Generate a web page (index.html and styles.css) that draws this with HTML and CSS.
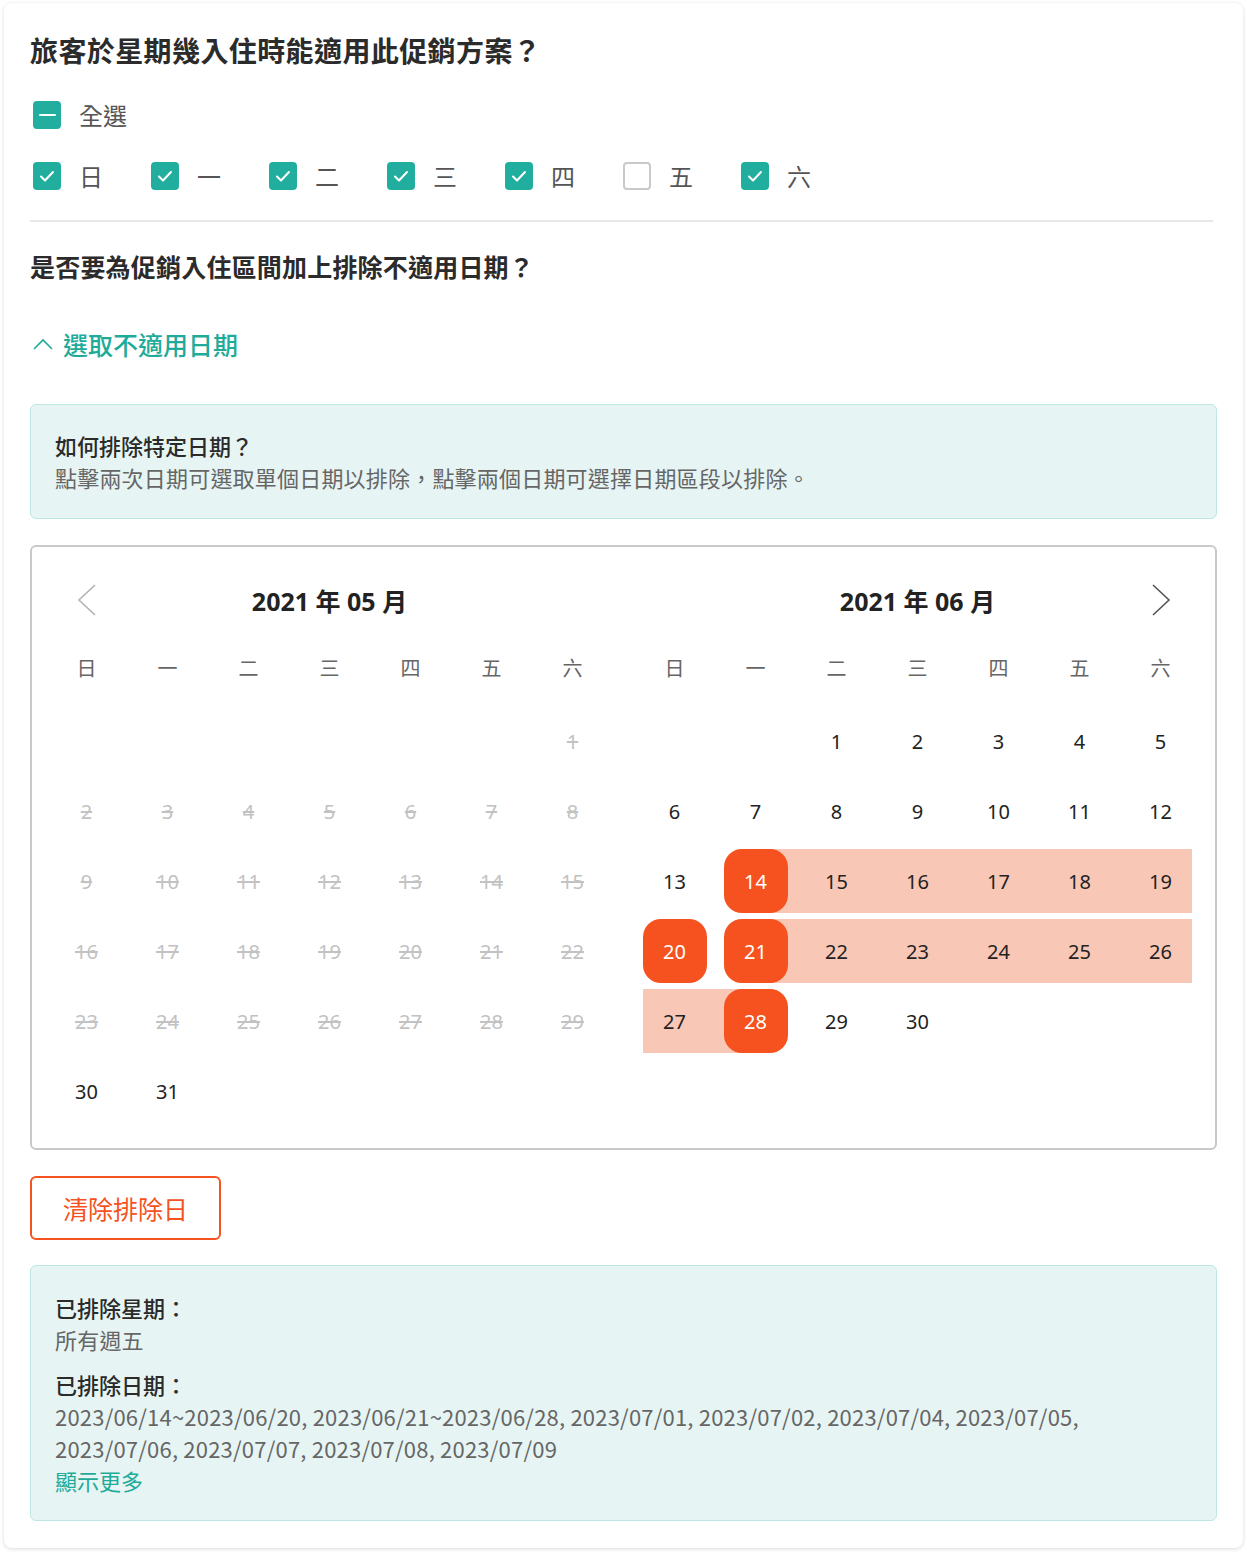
FILE: index.html
```html
<!DOCTYPE html>
<html lang="zh-Hant">
<head>
  <meta charset="UTF-8" />
  <meta name="viewport" content="width=device-width, initial-scale=1.0"/>
  <title>促銷方案 - 排除日期</title>
  <link rel="stylesheet" href="styles.css">
</head>
<body>

<div class="card">
  <h2 class="title">旅客於星期幾入住時能適用此促銷方案？</h2>

  <div class="check-row all">
    <label class="check"><span class="box partial"><i></i></span><span class="label">全選</span></label>
  </div>

  <div class="check-row days">
    <label class="check"><span class="box on"><svg viewBox="0 0 28 28"><polyline points="8,14.5 12,18.5 20,10"/></svg></span><span class="label">日</span></label>
    <label class="check"><span class="box on"><svg viewBox="0 0 28 28"><polyline points="8,14.5 12,18.5 20,10"/></svg></span><span class="label">一</span></label>
    <label class="check"><span class="box on"><svg viewBox="0 0 28 28"><polyline points="8,14.5 12,18.5 20,10"/></svg></span><span class="label">二</span></label>
    <label class="check"><span class="box on"><svg viewBox="0 0 28 28"><polyline points="8,14.5 12,18.5 20,10"/></svg></span><span class="label">三</span></label>
    <label class="check"><span class="box on"><svg viewBox="0 0 28 28"><polyline points="8,14.5 12,18.5 20,10"/></svg></span><span class="label">四</span></label>
    <label class="check"><span class="box"></span><span class="label">五</span></label>
    <label class="check"><span class="box on"><svg viewBox="0 0 28 28"><polyline points="8,14.5 12,18.5 20,10"/></svg></span><span class="label">六</span></label>
  </div>

  <hr class="divider">

  <h3 class="subtitle">是否要為促銷入住區間加上排除不適用日期？</h3>

  <div class="toggle">
    <svg viewBox="0 0 20 12"><polyline points="1,11 10,2 19,11"/></svg>
    <span>選取不適用日期</span>
  </div>

  <div class="notice">
    <div class="notice-title">如何排除特定日期？</div>
    <div class="notice-text">點擊兩次日期可選取單個日期以排除，點擊兩個日期可選擇日期區段以排除。</div>
  </div>

  <div class="calendar">
    <div class="months">
      <!-- May -->
      <div class="month">
        <div class="month-head">
          <span class="nav prev"><svg viewBox="0 0 20 32"><polyline points="18,1 2,16 18,31"/></svg></span>
          <span class="month-title">2021 年 05 月</span>
          <span></span>
        </div>
        <div class="week">
          <span>日</span><span>一</span><span>二</span><span>三</span><span>四</span><span>五</span><span>六</span>
        </div>
        <div class="days-grid">
          <div class="day"></div><div class="day"></div><div class="day"></div><div class="day"></div><div class="day"></div><div class="day"></div><div class="day off"><span>1</span></div>
          <div class="day off"><span>2</span></div><div class="day off"><span>3</span></div><div class="day off"><span>4</span></div><div class="day off"><span>5</span></div><div class="day off"><span>6</span></div><div class="day off"><span>7</span></div><div class="day off"><span>8</span></div>
          <div class="day off"><span>9</span></div><div class="day off"><span>10</span></div><div class="day off"><span>11</span></div><div class="day off"><span>12</span></div><div class="day off"><span>13</span></div><div class="day off"><span>14</span></div><div class="day off"><span>15</span></div>
          <div class="day off"><span>16</span></div><div class="day off"><span>17</span></div><div class="day off"><span>18</span></div><div class="day off"><span>19</span></div><div class="day off"><span>20</span></div><div class="day off"><span>21</span></div><div class="day off"><span>22</span></div>
          <div class="day off"><span>23</span></div><div class="day off"><span>24</span></div><div class="day off"><span>25</span></div><div class="day off"><span>26</span></div><div class="day off"><span>27</span></div><div class="day off"><span>28</span></div><div class="day off"><span>29</span></div>
          <div class="day"><span>30</span></div><div class="day"><span>31</span></div>
        </div>
      </div>

      <!-- June -->
      <div class="month">
        <div class="month-head">
          <span></span>
          <span class="month-title">2021 年 06 月</span>
          <span class="nav next"><svg viewBox="0 0 20 32"><polyline points="2,1 18,16 2,31"/></svg></span>
        </div>
        <div class="week">
          <span>日</span><span>一</span><span>二</span><span>三</span><span>四</span><span>五</span><span>六</span>
        </div>
        <div class="days-grid">
          <div class="day"></div><div class="day"></div><div class="day"><span>1</span></div><div class="day"><span>2</span></div><div class="day"><span>3</span></div><div class="day"><span>4</span></div><div class="day"><span>5</span></div>
          <div class="day"><span>6</span></div><div class="day"><span>7</span></div><div class="day"><span>8</span></div><div class="day"><span>9</span></div><div class="day"><span>10</span></div><div class="day"><span>11</span></div><div class="day"><span>12</span></div>
          <div class="day"><span>13</span></div><div class="day sel start"><span>14</span></div><div class="day in"><span>15</span></div><div class="day in"><span>16</span></div><div class="day in"><span>17</span></div><div class="day in"><span>18</span></div><div class="day in last"><span>19</span></div>
          <div class="day sel"><span>20</span></div><div class="day sel start"><span>21</span></div><div class="day in"><span>22</span></div><div class="day in"><span>23</span></div><div class="day in"><span>24</span></div><div class="day in"><span>25</span></div><div class="day in last"><span>26</span></div>
          <div class="day in first"><span>27</span></div><div class="day sel end"><span>28</span></div><div class="day"><span>29</span></div><div class="day"><span>30</span></div>
        </div>
      </div>
    </div>
  </div>

  <button class="btn-clear">清除排除日</button>

  <div class="notice summary">
    <div class="notice-title">已排除星期：</div>
    <div class="notice-text">所有週五</div>
    <div class="notice-title gap">已排除日期：</div>
    <div class="notice-text">2023/06/14~2023/06/20, 2023/06/21~2023/06/28, 2023/07/01, 2023/07/02, 2023/07/04, 2023/07/05, 2023/07/06, 2023/07/07, 2023/07/08, 2023/07/09</div>
    <div class="more">顯示更多</div>
  </div>
</div>

</body>
</html>
```

FILE: styles.css
```css
* {
  box-sizing: border-box;
}

body {
  margin: 0;
  background: #fff;
  font-family: "Noto Sans CJK TC", "Noto Sans", sans-serif;
  color: #333;
}

.card {
  margin: 3px 4px 4px;
  padding: 27px 26px 27px;
  background: #fff;
  border-radius: 8px;
  box-shadow: 0 1px 4px rgba(0, 0, 0, 0.14);
}

.title {
  margin: 0;
  font-size: 28px;
  line-height: 40px;
  font-weight: 700;
  letter-spacing: 0.4px;
  color: #2b2b2b;
}

.check-row {
  display: flex;
  gap: 48px;
  padding-left: 3px;
}

.check-row.all {
  margin-top: 29px;
}

.check-row.days {
  margin-top: 29px;
}

.check {
  display: flex;
  align-items: center;
  gap: 18px;
  height: 32px;
}

.box {
  width: 28px;
  height: 28px;
  border-radius: 4px;
  border: 2px solid #c9c9c9;
  background: #fff;
  display: flex;
  align-items: center;
  justify-content: center;
}

.box.on,
.box.partial {
  background: #21ae9f;
  border-color: #21ae9f;
}

.box svg {
  width: 28px;
  height: 28px;
  flex-shrink: 0;
}

.box polyline {
  fill: none;
  stroke: #fff;
  stroke-width: 2;
  stroke-linecap: round;
  stroke-linejoin: round;
}

.box.partial i {
  width: 17px;
  height: 2.5px;
  background: #fff;
  border-radius: 1px;
}

.label {
  font-size: 24px;
  line-height: 32px;
  color: #555;
}

.divider {
  margin: 28px 4px 0 0;
  border: none;
  height: 2px;
  background: #e8e8e8;
}

.subtitle {
  margin: 26px 0 0;
  font-size: 25px;
  line-height: 36px;
  font-weight: 700;
  letter-spacing: 0.2px;
  color: #2b2b2b;
}

.toggle {
  margin-top: 42px;
  display: flex;
  align-items: center;
  gap: 10px;
  color: #1fab9a;
  font-size: 25px;
  line-height: 36px;
  font-weight: 500;
  padding-left: 3px;
}

.toggle svg {
  width: 20px;
  height: 12px;
}

.toggle polyline {
  fill: none;
  stroke: #1fab9a;
  stroke-width: 1.6;
}

.notice {
  margin-top: 42px;
  padding: 24px 24px 25px;
  background: #e6f5f4;
  border: 1px solid #bce7e2;
  border-radius: 6px;
}

.notice-title {
  font-size: 22px;
  line-height: 32px;
  font-weight: 500;
  color: #2b2b2b;
}

.notice-title.gap {
  margin-top: 13px;
}

.notice-text {
  font-size: 22px;
  line-height: 32px;
  letter-spacing: 0.2px;
  color: #666;
}

.calendar {
  margin-top: 26px;
  border: 2px solid #c9c9c9;
  border-radius: 6px;
  padding: 21px 14px 25px;
  font-family: "Noto Sans", "Noto Sans CJK TC", sans-serif;
}

.months {
  display: grid;
  grid-template-columns: 567px 567px;
  gap: 21px;
}

.month-head {
  display: grid;
  grid-template-columns: 81px 1fr 81px;
  align-items: center;
  height: 64px;
}

.nav {
  display: flex;
  justify-content: center;
}

.nav svg {
  width: 20px;
  height: 32px;
}

.nav polyline {
  fill: none;
  stroke-width: 1.6;
}

.nav.prev polyline {
  stroke: #b3b3b3;
}

.nav.next polyline {
  stroke: #555;
}

.month-title {
  text-align: center;
  font-size: 25px;
  font-weight: 700;
  color: #222;
}

.week {
  margin-top: 15px;
  display: grid;
  grid-template-columns: repeat(7, 81px);
  height: 40px;
  align-items: center;
  text-align: center;
  font-family: "Noto Sans CJK TC", sans-serif;
  font-size: 20px;
  color: #666;
}

.days-grid {
  margin-top: 22px;
  display: grid;
  grid-template-columns: repeat(7, 81px);
  grid-auto-rows: 64px;
  row-gap: 6px;
}

.day {
  display: flex;
  align-items: center;
  justify-content: center;
  font-size: 20px;
  color: #222;
}

.day span {
  width: 64px;
  height: 64px;
  border-radius: 18px;
  display: flex;
  align-items: center;
  justify-content: center;
}

.day.off span {
  color: #c2c2c2;
  text-decoration: line-through;
}

.day.in {
  background: #f9c7b6;
}

.day.in.first {
  background: linear-gradient(to right, transparent 8.5px, #f9c7b6 8.5px);
}

.day.in.last {
  background: linear-gradient(to left, transparent 8.5px, #f9c7b6 8.5px);
}

.day.start {
  background: linear-gradient(to right, transparent 50%, #f9c7b6 50%);
}

.day.end {
  background: linear-gradient(to left, transparent 50%, #f9c7b6 50%);
}

.day.sel span {
  background: #f5521f;
  color: #fff;
}

.btn-clear {
  display: block;
  margin-top: 26px;
  height: 64px;
  padding: 0 31px;
  background: #fff;
  border: 2px solid #f5521f;
  border-radius: 6px;
  color: #f5521f;
  font-family: "Noto Sans CJK TC", sans-serif;
  font-size: 25px;
  cursor: pointer;
}

.notice.summary {
  margin-top: 25px;
  padding: 25px 24px 24px;
}

.more {
  font-size: 22px;
  line-height: 32px;
  color: #1fab9a;
}
```
